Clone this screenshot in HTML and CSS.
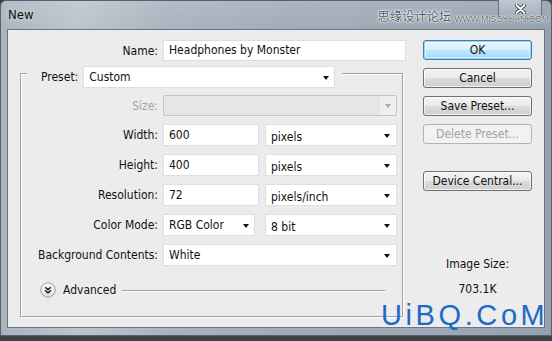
FILE: index.html
```html
<!DOCTYPE html>
<html lang="en">
<head>
  <meta charset="UTF-8" />
  <title>New</title>
  <link rel="stylesheet" href="styles.css">
</head>
<body>
  <div class="window">
    <div class="titlebar">
      <span class="title">New</span>
      <span class="close">
        <svg width="11" height="10" viewBox="0 0 11 10">
          <path d="M1.5 1 L9.5 9 M9.5 1 L1.5 9" stroke="#2e353d" stroke-width="3.6" stroke-linecap="round"/>
          <path d="M1.5 1 L9.5 9 M9.5 1 L1.5 9" stroke="#ffffff" stroke-width="1.8" stroke-linecap="round"/>
        </svg>
      </span>
      <span class="brand"><span class="brand-cn">思缘设计论坛</span><span class="brand-url">WWW.MISSYUAN.COM</span></span>
    </div>
    <div class="client">
      <div class="form">
        <div class="name-row">
          <label class="label name-label">Name:</label>
          <div class="field name-field">Headphones by Monster</div>
        </div>
        <div class="group">
          <div class="group-head">
            <label class="label">Preset:</label>
            <div class="select preset">Custom</div>
          </div>
          <div class="rows">
            <div class="row">
              <label class="label off">Size:</label>
              <div class="select disabled wide"><span class="drop"></span></div>
            </div>
            <div class="row">
              <label class="label">Width:</label>
              <div class="field num">600</div>
              <div class="select unit">pixels</div>
            </div>
            <div class="row">
              <label class="label">Height:</label>
              <div class="field num">400</div>
              <div class="select unit">pixels</div>
            </div>
            <div class="row">
              <label class="label">Resolution:</label>
              <div class="field num">72</div>
              <div class="select unit">pixels/inch</div>
            </div>
            <div class="row">
              <label class="label">Color Mode:</label>
              <div class="select mode">RGB Color</div>
              <div class="select unit">8 bit</div>
            </div>
            <div class="row">
              <label class="label">Background Contents:</label>
              <div class="select wide">White</div>
            </div>
          </div>
          <div class="advanced">
            <svg class="adv-icon" width="16" height="16" viewBox="0 0 16 16">
              <defs>
                <linearGradient id="advg" x1="0" y1="0" x2="0" y2="1">
                  <stop offset="0" stop-color="#ffffff"/>
                  <stop offset="1" stop-color="#dcdcdc"/>
                </linearGradient>
              </defs>
              <circle cx="8" cy="8" r="7.2" fill="url(#advg)" stroke="#9b9b9b"/>
              <path d="M5.2 5.2 L8 7.6 L10.8 5.2 M5.2 8.4 L8 10.8 L10.8 8.4" fill="none" stroke="#1c1c1c" stroke-width="1.5"/>
            </svg>
            <span class="adv-text">Advanced</span>
            <span class="adv-line"></span>
          </div>
        </div>
      </div>
      <div class="actions">
        <button class="btn ok">OK</button>
        <button class="btn">Cancel</button>
        <button class="btn">Save Preset...</button>
        <button class="btn" disabled>Delete Preset...</button>
        <button class="btn device">Device Central...</button>
        <div class="size-label">Image Size:</div>
        <div class="size-value">703.1K</div>
      </div>
    </div>
    <div class="watermark">UiBQ.CoM</div>
  </div>
</body>
</html>
```
FILE: styles.css
```css
html, body {
  margin: 0; padding: 0; height: 100%;
  background: #3e4247; overflow: hidden;
  font-family: 'DejaVu Sans Condensed', 'DejaVu Sans', sans-serif;
  font-stretch: condensed; font-size: 12px; color: #111;
}
.window {
  position: relative; width: 552px; height: 336px; box-sizing: border-box;
  border: 1px solid #56616d; border-radius: 6px 6px 0 0; padding: 0 6px;
  background:
    linear-gradient(180deg, rgba(255,255,255,0.12), rgba(255,255,255,0) 30px),
    linear-gradient(90deg, #aab4bf 0%, #bcc4cd 14%, #a9b3bf 30%, #a0abb8 55%, #9ca8b5 80%, #95a1ae 100%);
}
.titlebar {
  height: 28px; display: flex; align-items: center; position: relative;
}
.title {
  font-size: 13px; color: #111; padding-left: 1px; margin-top: -1px;
  text-shadow: 0 0 6px rgba(255,255,255,0.7);
}
.close {
  position: absolute; right: 3px; top: -1px; width: 44px; height: 19px;
  box-sizing: border-box; border: 1px solid #67727f; border-top: none;
  border-radius: 0 0 4px 4px; padding-top: 4px;
  background: linear-gradient(180deg, #bfc7d0, #a3aebb);
  display: flex; align-items: flex-start; justify-content: center;
}
.close svg { display: block; }
.brand {
  position: absolute; right: -4px; top: 8px; display: flex; align-items: flex-end; gap: 3px;
}
.brand-cn {
  font-family: 'Noto Sans CJK SC', sans-serif; font-size: 12px; line-height: 14px;
  color: #4f5964; letter-spacing: 0.3px;
  text-shadow: 0 0 1px #fff, 0 0 2px #fff, 0 0 3px #fff;
}
.brand-url {
  font-family: 'Liberation Sans', sans-serif; font-size: 8.7px; line-height: 8px;
  color: #59636e;
  text-shadow: 0 0 1px #fff, 0 0 1px #fff, 0 0 2px #fff;
}
.client {
  height: 299px; box-sizing: border-box; display: flex;
  background: #ececec; border: 1px solid #6c7682;
}
.form { width: 402px; }
.name-row { display: flex; align-items: center; margin-top: 10px; }
.label {
  flex: none; text-align: right; white-space: nowrap; margin-right: 5px;
}
.name-label { width: 150px; }
.field, .select {
  height: 22px; box-sizing: border-box; background: #fff;
  border: 1px solid #dedede; padding: 0 5px; line-height: 20px;
  white-space: nowrap; position: relative;
}
.name-field { width: 243px; height: 21px; line-height: 19px; }
.select::after {
  content: ''; position: absolute; right: 6px; top: 9px;
  border-left: 3.5px solid transparent; border-right: 3.5px solid transparent;
  border-top: 4px solid #111;
}
.group {
  margin: 12px 0 0 12px; width: 383px; box-sizing: border-box;
  border: 1px solid #a2a2a2; box-shadow: inset 1px 1px 0 #fff, 1px 1px 0 #fff;
  padding-bottom: 18px;
}
.group-head {
  display: flex; align-items: center; width: fit-content;
  margin: -8px 0 0 6px; padding: 0 7px 0 14px; background: #ececec;
}
.preset { width: 252px; }
.preset::after { right: 5px; }
.rows { display: flex; flex-direction: column; gap: 8px; margin-top: 7px; }
.row { display: flex; align-items: center; }
.row .label { width: 137px; }
.off { color: #a5a5a5; }
.wide { width: 234px; }
.num { width: 96px; }
.unit { width: 132px; margin-left: 6px; padding-top: 2px; }
.mode { width: 92px; margin-right: 4px; }
.mode::after { right: 5px; }
.disabled {
  height: 21px; background: #e6e6e6; border-color: #c6c6c6; border-radius: 2px;
}
.disabled::after { border-top-color: #a9a9a9; right: 5px; top: 8px; }
.drop {
  position: absolute; right: 0; top: 0; bottom: 0; width: 16px;
  background: #eeeeee; border-radius: 0 2px 2px 0;
}
.advanced {
  display: flex; align-items: center; margin: 16px 0 0 19px; height: 16px;
}
.adv-icon { flex: none; }
.adv-text { margin-left: 7px; }
.adv-line {
  width: 263px; height: 1px; background: #a0a0a0; margin-left: 6px;
  box-shadow: 0 1px 0 #fff;
}
.actions {
  width: 109px; margin: 10px 0 0 13px; display: flex; flex-direction: column; gap: 8px;
}
.btn {
  height: 20px; box-sizing: border-box; padding: 0; font: inherit; color: #111;
  border: 1px solid #707070; border-radius: 3px;
  background: linear-gradient(180deg, #f3f3f3 0%, #ebebeb 49%, #dcdcdc 50%, #cfcfcf 100%);
  box-shadow: inset 0 0 0 1px rgba(255,255,255,0.7);
}
.btn.ok {
  border-color: #3c7fb1;
  background: linear-gradient(180deg, #eaf6fd 0%, #d9f0fc 49%, #bee6fd 50%, #a7d9f5 100%);
  box-shadow: inset 0 0 0 1px #8fd4f5, inset 0 0 0 2px rgba(255,255,255,0.5);
}
.btn:disabled {
  color: #a2a2a2; border-color: #b3b3b3; background: #f2f2f2; box-shadow: none;
}
.btn.device { margin-top: 19px; }
.size-label { text-align: center; margin-top: 58px; }
.size-value { text-align: center; margin-top: 3px; }
.watermark {
  position: absolute; left: 380px; top: 300px;
  font-family: 'Liberation Sans', sans-serif; font-size: 29px; line-height: 29px;
  letter-spacing: 3.6px; color: #1b6ac6; white-space: nowrap;
}
```
